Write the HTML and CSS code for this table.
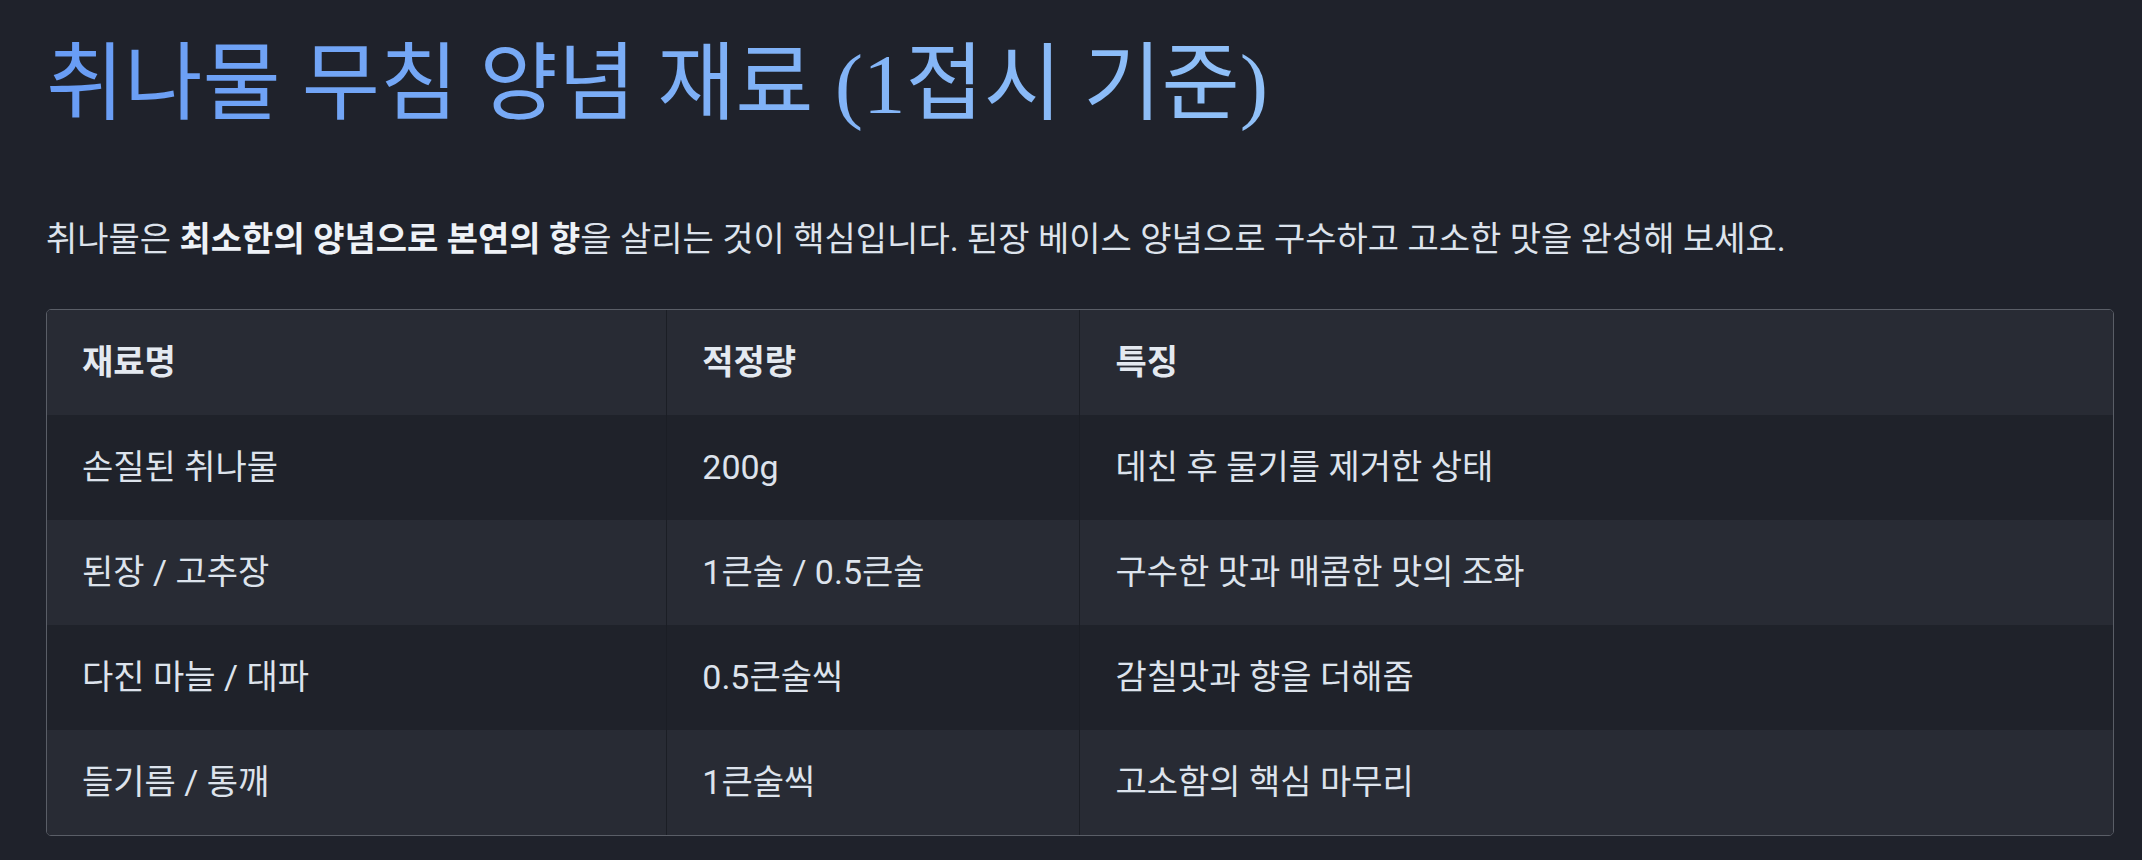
FILE: index.html
```html
<!DOCTYPE html>
<html lang="ko">
<head>
<meta charset="utf-8">
<title>취나물 무침 양념 재료</title>
<link rel="stylesheet" href="styles.css">
</head>
<body>
<main class="page">
  <h1 class="title"><span class="title-text">취나물 무침 양념 재료 (1접시 기준)</span></h1>
  <p class="lead">취나물은 <strong>최소한의 양념으로 본연의 향</strong>을 살리는 것이 핵심입니다. 된장 베이스 양념으로 구수하고 고소한 맛을 완성해 보세요.</p>
  <div class="table-wrap">
    <table class="recipe">
      <colgroup>
        <col class="c1"><col class="c2"><col class="c3">
      </colgroup>
      <thead>
        <tr><th>재료명</th><th>적정량</th><th>특징</th></tr>
      </thead>
      <tbody>
        <tr><td>손질된 취나물</td><td>200g</td><td>데친 후 물기를 제거한 상태</td></tr>
        <tr><td>된장 / 고추장</td><td>1큰술 / 0.5큰술</td><td>구수한 맛과 매콤한 맛의 조화</td></tr>
        <tr><td>다진 마늘 / 대파</td><td>0.5큰술씩</td><td>감칠맛과 향을 더해줌</td></tr>
        <tr><td>들기름 / 통깨</td><td>1큰술씩</td><td>고소함의 핵심 마무리</td></tr>
      </tbody>
    </table>
  </div>
</main>
</body>
</html>
```
FILE: styles.css
```css
html, body {
  margin: 0;
  padding: 0;
  background: #1f222b;
}
body {
  font-family: Roboto, "Noto Sans CJK KR", sans-serif;
  color: #dde3ec;
}
.page {
  padding: 37px 28px 0 46px;
}
.title {
  margin: 0;
  font-family: "Liberation Serif", "Noto Sans CJK KR", serif;
  font-weight: 400;
  font-size: 85px;
  line-height: 95px;
}
.title-text {
  display: inline-block;
  background: linear-gradient(90deg, #689cf5 0%, #91c1f8 100%);
  -webkit-background-clip: text;
  background-clip: text;
  color: transparent;
}
.lead {
  margin: 82px 0 0;
  font-size: 34px;
  line-height: 50px;
  color: #dde3ec;
}
.lead strong {
  font-weight: 700;
  color: #eef2f7;
}
.table-wrap {
  margin-top: 45px;
  border: 1px solid #5a5e67;
  border-radius: 5px;
  overflow: hidden;
}
.recipe {
  width: 100%;
  border-collapse: collapse;
  table-layout: fixed;
  font-size: 34px;
}
.c1 { width: 30%; }
.c2 { width: 20%; }
.c3 { width: 50%; }
.recipe th,
.recipe td {
  text-align: left;
  padding: 31px 35px;
  line-height: 43px;
  border-right: 1px solid #1b1e25;
}
.recipe th:last-child,
.recipe td:last-child {
  border-right: 0;
}
.recipe th {
  font-weight: 700;
  color: #e4e9f0;
}
.recipe thead tr {
  background: #282b34;
}
.recipe tbody tr:nth-child(odd) {
  background: #1f222a;
}
.recipe tbody tr:nth-child(even) {
  background: #282b34;
}
```
